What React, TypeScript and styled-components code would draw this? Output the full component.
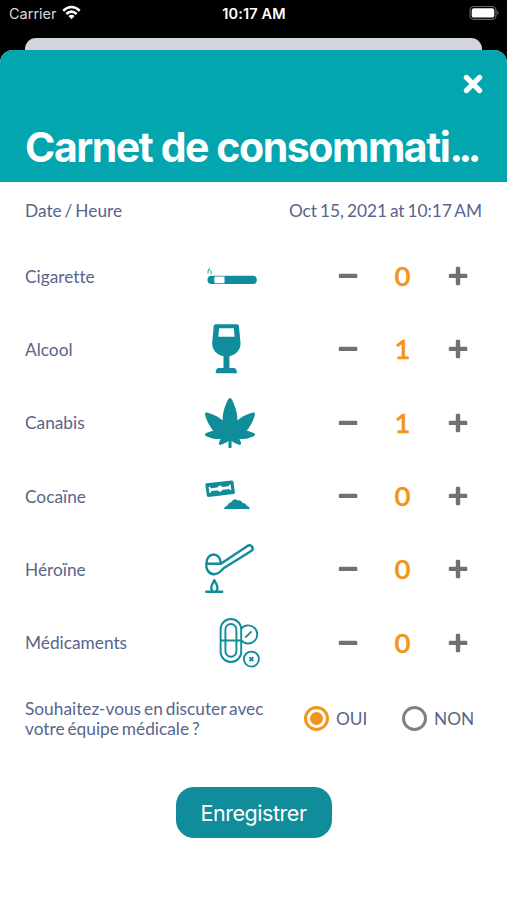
import React, { useState } from "react";
import styled, { createGlobalStyle } from "styled-components";
import { FaCannabis } from "react-icons/fa";

const teal = "#118c9a";
const orange = "#f29519";
const slate = "#59648a";

const GlobalStyle = createGlobalStyle`
  * { box-sizing: border-box; }
  body { margin: 0; background: #000; }
  button { border: 0; padding: 0; background: none; font: inherit; color: inherit; }
`;

const Screen = styled.main`
  width: 507px;
  height: 900px;
  display: flex;
  flex-direction: column;
  overflow: hidden;
  background: #000;
  color: ${slate};
  font-family: Lato, sans-serif;
  font-size: 17.3px;
  word-spacing: -1.5px;
  font-variant-ligatures: none;
`;

const StatusBar = styled.div`
  height: 38px;
  flex: none;
  display: grid;
  grid-template-columns: 1fr auto 1fr;
  align-items: start;
  padding: 5px 8px 0 9px;
  color: #fff;
  font-family: Inter, sans-serif;
  font-size: 14.5px;
  line-height: 18px;
  word-spacing: 0;
`;

const Carrier = styled.div`
  display: flex;
  gap: 6px;
  color: #d9d9d9;
  letter-spacing: 0;
`;

const CarrierName = styled.span`
  width: 47px;
  white-space: nowrap;
`;

const Clock = styled.div`
  font-weight: 600;
  font-size: 14.5px;
  letter-spacing: 0.15px;
`;

const Battery = styled.svg`
  justify-self: end;
`;

const BackCard = styled.div`
  height: 12px;
  flex: none;
  margin: 0 25px;
  border-radius: 11px 11px 0 0;
  background: #d3d5dc;
`;

const SheetBackdrop = styled.div`
  flex: 1;
  display: flex;
`;

const Sheet = styled.section`
  flex: 1;
  display: flex;
  flex-direction: column;
  overflow: hidden;
  border-radius: 13px 13px 0 0;
  background: #fff;
`;

const Header = styled.header`
  height: 131.5px;
  display: flex;
  flex-direction: column;
  justify-content: space-between;
  padding: 24px 24px 9.5px 25px;
  background: #03a5af;
  color: #fff;
`;

const CloseButton = styled.button`
  align-self: flex-end;
  height: 20px;
  display: flex;
`;

const Title = styled.h1`
  margin: 0;
  font: 700 41px/50px Inter, sans-serif;
  letter-spacing: -1.45px;
  word-spacing: 0;
  white-space: nowrap;
`;

const Dots = styled.span`
  letter-spacing: -4.6px;
`;

const DateRow = styled.div`
  height: 58px;
  display: flex;
  justify-content: space-between;
  align-items: center;
  padding: 0 25px;
  white-space: nowrap;
`;

const Rows = styled.div`
  display: flex;
  flex-direction: column;
`;

const Row = styled.div`
  height: 73.3px;
  display: grid;
  grid-template-columns: 165px 80px 50px 165px;
  align-items: center;
  padding-left: 25px;
`;

const IconSlot = styled.div`
  width: 80px;
  height: 60px;
  display: flex;
  align-items: center;
  justify-content: center;
`;

const Stepper = styled.div`
  grid-column: 4;
  display: grid;
  grid-template-columns: repeat(3, 55px);
  place-items: center;
`;

const StepButton = styled.button`
  display: flex;
  color: #717171;
`;

const Count = styled.span`
  color: ${orange};
  font-weight: 600;
  font-size: 27.5px;
  line-height: 34px;
  -webkit-text-stroke: 0.35px ${orange};
`;

const Question = styled.div`
  height: 78px;
  display: flex;
  align-items: center;
  padding-left: 25px;
`;

const QuestionText = styled.p`
  width: 279px;
  margin: 0;
  padding-top: 1.5px;
  line-height: 20.5px;
  white-space: nowrap;
`;

const Option = styled.button<{ $width: number }>`
  width: ${(p) => p.$width}px;
  display: flex;
  align-items: center;
  gap: 7px;
`;

const Radio = styled.span<{ $on: boolean }>`
  width: 25px;
  height: 25px;
  flex: none;
  display: grid;
  place-items: center;
  border: 3px solid ${(p) => (p.$on ? orange : "#808080")};
  border-radius: 50%;
  &::after {
    content: "";
    width: 13px;
    height: 13px;
    border-radius: 50%;
    background: ${(p) => (p.$on ? orange : "transparent")};
  }
`;

const SaveButton = styled.button`
  align-self: center;
  width: 156px;
  height: 51px;
  margin-top: 30px;
  border-radius: 18px;
  background: ${teal};
  color: #fff;
  font: 400 21.5px/52px Inter, sans-serif;
  letter-spacing: -0.45px;
`;

const Art = ({ children }: { children: React.ReactNode }) => (
  <svg width="80" height="60" viewBox="0 0 80 60" fill="none">
    {children}
  </svg>
);

const Cigarette = () => (
  <Art>
    <rect x="17.5" y="29.8" width="49.3" height="8.2" rx="4.1" fill={teal} />
    <path d="M24.8 30.6H34.5V37.2H24.8Q23.4 34 24.8 30.6Z" fill="#fff" />
    <path d="M20 22.5Q17.2 24.5 18.3 27.5M20 24.4Q22.5 26 20.5 28.2" stroke={teal} strokeWidth="1.1" opacity="0.8" />
  </Art>
);

const Glass = () => (
  <Art>
    <path
      fill={teal}
      fillRule="evenodd"
      d="M25.4 5.2H47.1Q48.7 5.2 48.9 6.8L50.5 23.5C51 30.5 46.3 35.8 39.4 37.3V49.1H44.3Q46.9 49.7 46.9 54.2H25.7Q25.7 49.7 28.3 49.1H33.5V37.3C26.5 35.8 21.7 30.5 22.2 23.5L23.7 6.8Q23.9 5.2 25.4 5.2ZM29.1 9.3L28.3 17.7H44.6L43.8 9.3Z"
    />
  </Art>
);

const Blade = () => (
  <Art>
    <path
      fill={teal}
      fillRule="evenodd"
      d="M16.5 17.3L41.8 14.6Q43.3 14.5 43.5 16L44.9 26.4Q45 27.7 43.7 27.9L18.5 30.9Q16.9 31 16.8 29.6L15.3 18.8Q15.2 17.4 16.5 17.3ZM18.6 20.9L19.5 26.9L20.8 26.7L21.4 25.1L27.9 24.4Q30.3 27.2 32.8 23.8L39.3 23L40.2 24.2L41.3 24L40.5 18.4L39.4 18.6L38.7 20.2L32.3 20.9Q29.7 18 27.4 21.5L20.9 22.2L20 20.7Z"
    />
    <path d="M33.8 43Q34.6 40.2 37.5 39.6Q38.5 36.6 41 36.3Q44.5 31.4 47.6 34.4Q51.2 33.4 52.7 37.1Q55.5 37 56.6 39.5Q59.3 40.3 59.9 43Z" fill={teal} />
  </Art>
);

const Spoon = () => (
  <Art>
    <g stroke={teal} strokeWidth="2.4" strokeLinecap="round" strokeLinejoin="round">
      <path d="M16.4 24.7H30.8L57.5 6.9C61.3 4.6 64.6 9.5 61.2 12L33.5 29.3C31 31.5 29 35.2 24 35.2C18.5 35.2 15.5 29.5 16.4 24.7C16.4 12.5 30.8 12.4 30.8 24.7" />
      <path d="M24.3 41.2C23 44.3 21.2 46 21.2 48.8Q21.2 51.1 22.8 52.4M24.3 41.2C25.7 44.3 27.5 46 27.5 48.8Q27.5 51.1 25.9 52.4M16.2 52.7H32.2" />
    </g>
  </Art>
);

const Pills = () => (
  <Art>
    <g stroke={teal} strokeWidth="1.9">
      <rect x="30.6" y="6" width="20.6" height="43" rx="10.3" />
      <rect x="35.4" y="11" width="11" height="32.8" rx="5.5" />
      <path d="M30.6 27.5H51.2M51.1 15.7A9.1 9.1 0 1 1 51.3 27.4M55.2 24.6L61.5 18.3" />
      <circle cx="61.4" cy="46.1" r="7.5" />
      <path d="M59.5 44.2L63.3 48M63.3 44.2L59.5 48" />
    </g>
  </Art>
);

const Minus = () => (
  <svg width="20" height="20" viewBox="0 0 20 20">
    <rect x="0.8" y="7.7" width="18.5" height="4.4" rx="1.2" fill="currentColor" />
  </svg>
);

const Plus = () => (
  <svg width="20" height="20" viewBox="0 0 20 20" fill="currentColor">
    <rect x="0.8" y="7.7" width="18.5" height="4.4" rx="1.2" />
    <rect x="7.8" y="0.7" width="4.4" height="18.5" rx="1.2" />
  </svg>
);

const substances = [
  { name: "Cigarette", icon: <Cigarette />, count: 0 },
  { name: "Alcool", icon: <Glass />, count: 1 },
  { name: "Canabis", icon: <FaCannabis size={50} color={teal} />, count: 1 },
  { name: "Cocaïne", icon: <Blade />, count: 0 },
  { name: "Héroïne", icon: <Spoon />, count: 0 },
  { name: "Médicaments", icon: <Pills />, count: 0 },
];

export default function App() {
  const [counts, setCounts] = useState(substances.map((s) => s.count));
  const [discuss, setDiscuss] = useState(true);
  const change = (index: number, delta: number) =>
    setCounts((all) => all.map((n, i) => (i === index ? Math.max(0, n + delta) : n)));

  return (
    <Screen>
      <GlobalStyle />
      <StatusBar>
        <Carrier>
          <CarrierName>Carrier</CarrierName>
          <svg width="19" height="15" viewBox="0 0 19 15" fill="none" stroke="#fff" strokeWidth="2.5">
            <path d="M1.2 5.7Q9.5-1.7 17.8 5.7M4.3 9Q9.5 4.2 14.7 9" />
            <path d="M6.4 11.1Q9.5 8.4 12.6 11.1L9.5 14.2Z" fill="#fff" stroke="none" />
          </svg>
        </Carrier>
        <Clock>10:17 AM</Clock>
        <Battery width="30" height="16" viewBox="0 0 30 16">
          <rect x="1" y="1.5" width="26" height="12.8" rx="3.8" fill="none" stroke="#666" strokeWidth="1.2" />
          <rect x="2.7" y="3.2" width="22.6" height="9.4" rx="2.2" fill="#fff" />
          <path d="M28.3 5.7Q30.7 7.9 28.3 10.1Z" fill="#777" />
        </Battery>
      </StatusBar>
      <BackCard />
      <SheetBackdrop>
        <Sheet>
          <Header>
            <CloseButton aria-label="Fermer">
              <svg width="20" height="20" viewBox="0 0 20 20" stroke="#fff" strokeWidth="5.2" strokeLinecap="round">
                <path d="M3.4 3.4L16.6 16.6M16.6 3.4L3.4 16.6" />
              </svg>
            </CloseButton>
            <Title>
              Carnet de consommati<Dots>...</Dots>
            </Title>
          </Header>
          <DateRow>
            <span>Date / Heure</span>
            <span>Oct 15, 2021 at 10:17 AM</span>
          </DateRow>
          <Rows>
            {substances.map((s, i) => (
              <Row key={s.name}>
                <span>{s.name}</span>
                <IconSlot>{s.icon}</IconSlot>
                <Stepper>
                  <StepButton aria-label="Moins" onClick={() => change(i, -1)}>
                    <Minus />
                  </StepButton>
                  <Count>{counts[i]}</Count>
                  <StepButton aria-label="Plus" onClick={() => change(i, 1)}>
                    <Plus />
                  </StepButton>
                </Stepper>
              </Row>
            ))}
          </Rows>
          <Question>
            <QuestionText>
              Souhaitez-vous en discuter avec
              <br />
              votre équipe médicale ?
            </QuestionText>
            <Option $width={98} onClick={() => setDiscuss(true)}>
              <Radio $on={discuss} />
              OUI
            </Option>
            <Option $width={80} onClick={() => setDiscuss(false)}>
              <Radio $on={!discuss} />
              NON
            </Option>
          </Question>
          <SaveButton>Enregistrer</SaveButton>
        </Sheet>
      </SheetBackdrop>
    </Screen>
  );
}
